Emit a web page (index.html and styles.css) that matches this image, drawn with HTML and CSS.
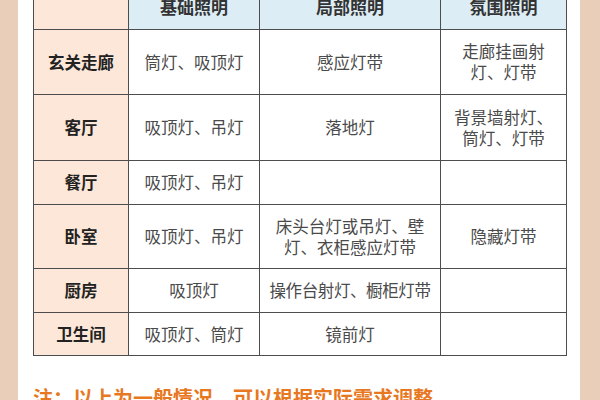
FILE: index.html
```html
<!DOCTYPE html>
<html lang="zh-CN">
<head>
<meta charset="utf-8">
<link rel="stylesheet" href="styles.css">
</head>
<body>
<div class="card">
  <table class="light-table">
    <colgroup>
      <col class="c-room">
      <col class="c-base">
      <col class="c-local">
      <col class="c-mood">
    </colgroup>
    <thead>
      <tr class="r-head">
        <th class="corner"></th>
        <th>基础照明</th>
        <th>局部照明</th>
        <th>氛围照明</th>
      </tr>
    </thead>
    <tbody>
      <tr class="r-tall">
        <th>玄关走廊</th>
        <td>筒灯、吸顶灯</td>
        <td>感应灯带</td>
        <td><span class="ln">走廊挂画射</span><span class="ln">灯、灯带</span></td>
      </tr>
      <tr class="r-tall2">
        <th>客厅</th>
        <td>吸顶灯、吊灯</td>
        <td>落地灯</td>
        <td><span class="ln">背景墙射灯、</span><span class="ln">筒灯、灯带</span></td>
      </tr>
      <tr class="r-short">
        <th>餐厅</th>
        <td>吸顶灯、吊灯</td>
        <td></td>
        <td></td>
      </tr>
      <tr class="r-tall3">
        <th>卧室</th>
        <td>吸顶灯、吊灯</td>
        <td><span class="ln">床头台灯或吊灯、壁</span><span class="ln">灯、衣柜感应灯带</span></td>
        <td>隐藏灯带</td>
      </tr>
      <tr class="r-short">
        <th>厨房</th>
        <td>吸顶灯</td>
        <td class="tight">操作台射灯、橱柜灯带</td>
        <td></td>
      </tr>
      <tr class="r-short2">
        <th>卫生间</th>
        <td>吸顶灯、筒灯</td>
        <td>镜前灯</td>
        <td></td>
      </tr>
    </tbody>
  </table>
  <p class="note">注：以上为一般情况，可以根据实际需求调整</p>
</div>
</body>
</html>
```
FILE: styles.css
```css
html, body {
  margin: 0;
  padding: 0;
}
body {
  background: #e9cfba;
  width: 600px;
  height: 400px;
  overflow: hidden;
  font-family: "Noto Sans CJK SC", "Noto Sans", sans-serif;
}
.card {
  margin: 0 20px 0 18px;
  height: 400px;
  background: #ffffff;
  padding: 0 14px 0 15px;
  overflow: hidden;
  box-sizing: border-box;
}
.light-table {
  margin-top: -17px;
  width: 533px;
  table-layout: fixed;
  border-collapse: collapse;
}
.c-room { width: 95px; }
.c-base { width: 131px; }
.c-local { width: 181px; }
.c-mood { width: 126px; }

.light-table th,
.light-table td {
  border: 1px solid #4d4d4d;
  padding: 0;
  text-align: center;
  vertical-align: middle;
  font-size: 16.5px;
  line-height: 21px;
}
.light-table td {
  color: #4a4a4a;
  font-weight: 400;
}
.ln {
  display: block;
  height: 21px;
  line-height: 21px;
}
.light-table tbody th {
  background: #fde7d8;
  color: #222222;
  font-weight: 700;
}
.r-head th {
  background: #dcedf5;
  color: #333333;
  font-weight: 700;
  font-size: 17px;
  height: 45px;
}
.r-head th.corner {
  background: #fde7d8;
}
.r-tall { height: 65px; }
.r-tall2 { height: 66px; }
.r-short { height: 44px; }
.r-tall3 { height: 64px; }
.r-short2 { height: 43px; }
.tight { letter-spacing: -0.4px; }

.note {
  margin: 29px 0 0 0;
  color: #e8781f;
  font-size: 20px;
  font-weight: 700;
  line-height: 26px;
}
```
